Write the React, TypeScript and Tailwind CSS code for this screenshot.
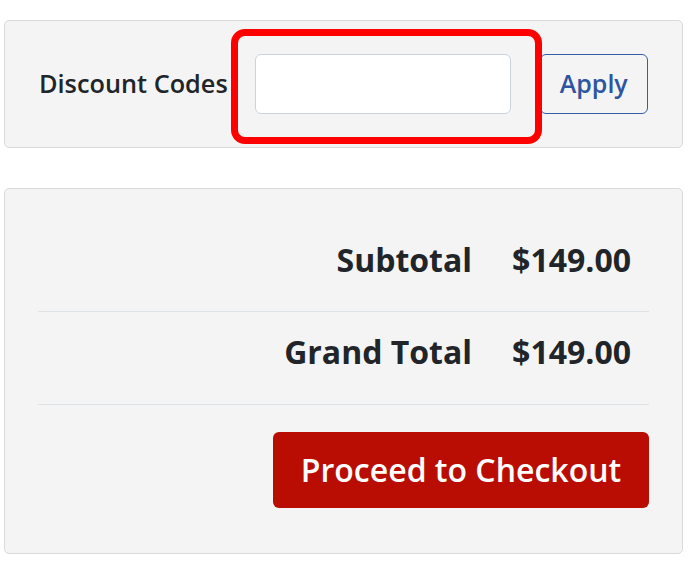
import React from 'react';

const font = { fontFamily: '"Open Sans", "Noto Sans", sans-serif' };

export default function App() {
  return (
    <div className="min-h-[575px] w-[700px] bg-white pt-5 pl-1 text-[#212529]" style={font}>
      {/* Discount codes */}
      <div className="relative flex h-[128px] w-[679px] items-center rounded-[5px] border border-[#dadada] bg-[#f4f4f4] pl-[34px] pr-[33px]">
        <label className="text-[25.3px] font-semibold leading-none whitespace-nowrap">Discount Codes</label>
        <input
          type="text"
          className="ml-[27px] h-[60px] w-[256px] rounded-[6px] border border-[#ccd3da] bg-white px-3 text-[22px] outline-none"
        />
        <button className="ml-[29px] h-[60px] w-[108px] rounded-[6px] border-[1.5px] border-[#3a5ca6] text-[25px] font-semibold text-[#2f55a0]">
          Apply
        </button>
        {/* highlight annotation */}
        <div className="pointer-events-none absolute left-[226px] top-[8px] h-[115px] w-[311px] rounded-[14px] border-[7px] border-[#ff0000]" />
      </div>

      {/* Totals */}
      <div className="mt-[40px] flex h-[366px] w-[679px] flex-col rounded-[5px] border border-[#dadada] bg-[#f4f4f4] px-[33px] pt-[47px]">
        <div className="flex items-center justify-end gap-[40px] pb-[27px] pr-[18px] text-[32px] font-bold leading-[48px]">
          <span>Subtotal</span>
          <span>$149.00</span>
        </div>
        <div className="h-px bg-[#dde2e7]" />
        <div className="flex items-center justify-end gap-[40px] pt-[16px] pb-[28px] pr-[18px] text-[32px] font-bold leading-[48px]">
          <span>Grand Total</span>
          <span>$149.00</span>
        </div>
        <div className="h-px bg-[#dde2e7]" />
        <div className="flex justify-end pt-[27px]">
          <button className="h-[76px] w-[376px] rounded-[6px] bg-[#b90d03] text-[32px] font-semibold text-white">
            Proceed to Checkout
          </button>
        </div>
      </div>
    </div>
  );
}
